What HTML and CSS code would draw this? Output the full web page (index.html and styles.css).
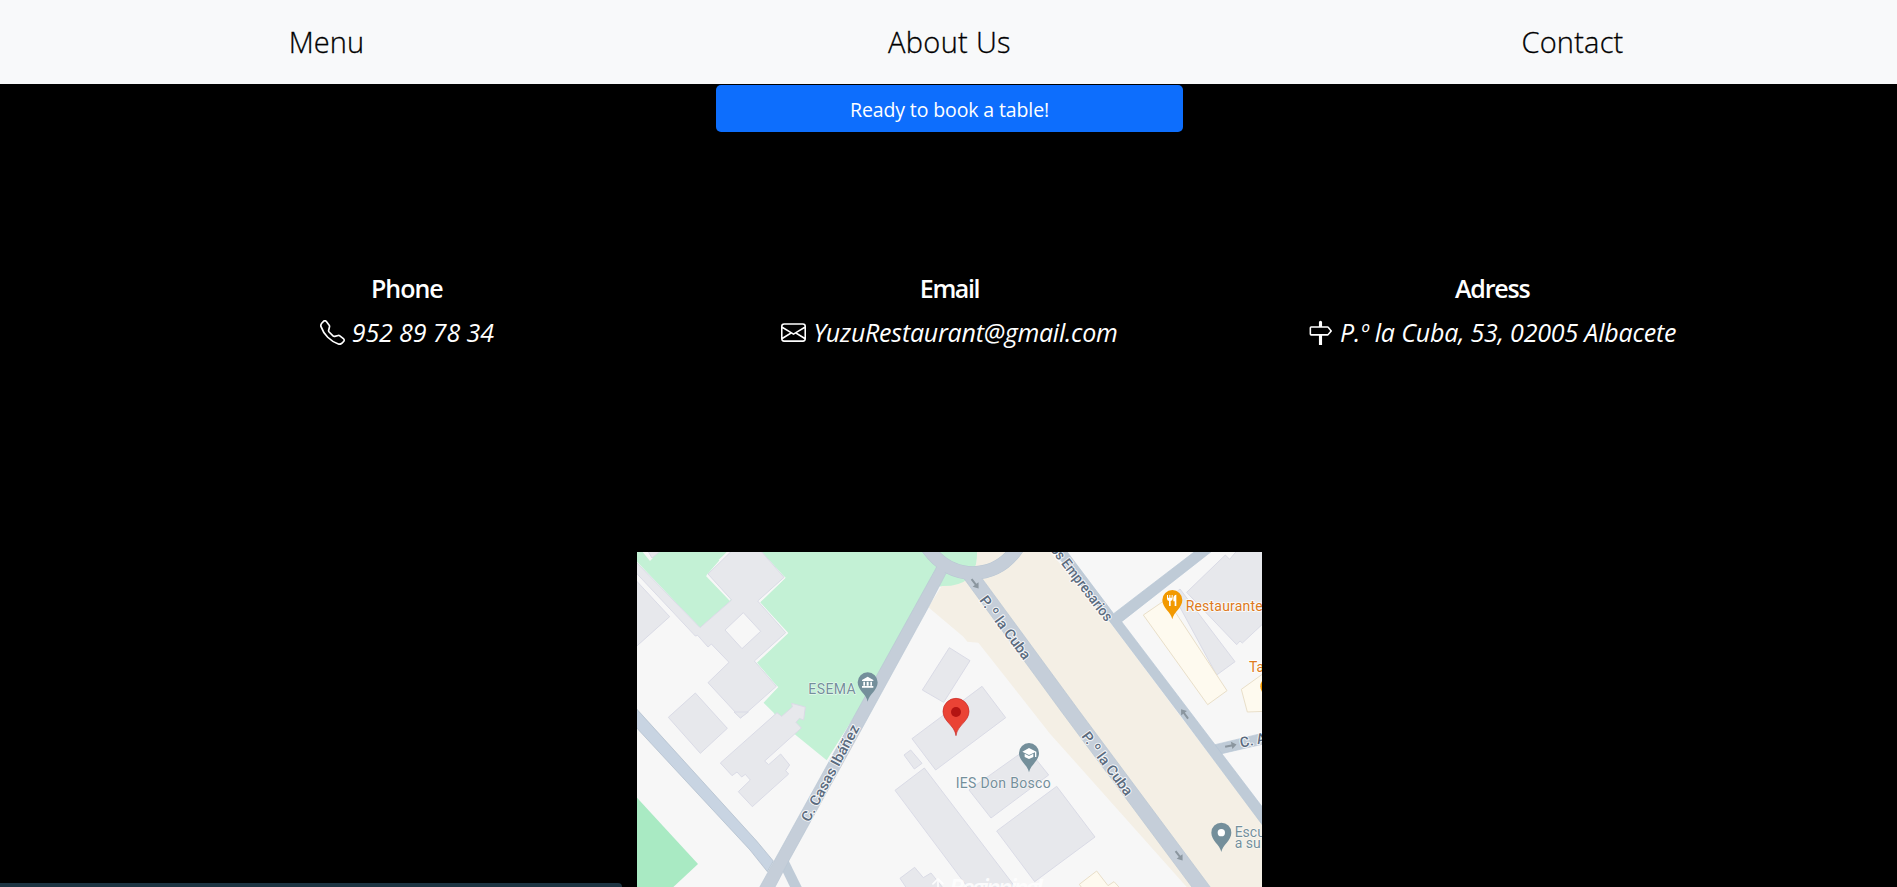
FILE: index.html
```html
<!DOCTYPE html>
<html lang="en">
<head>
<meta charset="utf-8">
<title>Yuzu Restaurant - Contact</title>
<link rel="stylesheet" href="styles.css">
</head>
<body>
<nav class="navbar">
  <a class="nav-menu">Menu</a>
  <a class="nav-about">About Us</a>
  <a class="nav-contact">Contact</a>
</nav>
<main>
  <button class="book">Ready to book a table!</button>
  <section class="contacts">
    <div class="card">
      <h2 class="h-phone">Phone</h2>
      <p><svg class="icon" viewBox="0 0 16 16"><path d="M3.654 1.328a.678.678 0 0 0-1.015-.063L1.605 2.3c-.483.484-.661 1.169-.45 1.77a17.568 17.568 0 0 0 4.168 6.608 17.569 17.569 0 0 0 6.608 4.168c.601.211 1.286.033 1.77-.45l1.034-1.034a.678.678 0 0 0-.063-1.015l-2.307-1.794a.678.678 0 0 0-.58-.122l-2.19.547a1.745 1.745 0 0 1-1.657-.459L5.482 8.062a1.745 1.745 0 0 1-.46-1.657l.548-2.19a.678.678 0 0 0-.122-.58L3.654 1.328zM1.884.511a1.745 1.745 0 0 1 2.612.163L6.29 2.98c.329.423.445.974.315 1.494l-.547 2.19a.678.678 0 0 0 .178.643l2.457 2.457a.678.678 0 0 0 .644.178l2.189-.547a1.745 1.745 0 0 1 1.494.315l2.306 1.794c.829.645.905 1.87.163 2.611l-1.034 1.034c-.74.74-1.846 1.065-2.877.702a18.634 18.634 0 0 1-7.01-4.42 18.634 18.634 0 0 1-4.42-7.009c-.362-1.03-.037-2.137.703-2.877L1.885.511z"/></svg><em class="t-phone">952 89 78 34</em></p>
    </div>
    <div class="card">
      <h2 class="h-email">Email</h2>
      <p><svg class="icon" viewBox="0 0 16 16"><path d="M0 4a2 2 0 0 1 2-2h12a2 2 0 0 1 2 2v8a2 2 0 0 1-2 2H2a2 2 0 0 1-2-2V4Zm2-1a1 1 0 0 0-1 1v.217l7 4.2 7-4.2V4a1 1 0 0 0-1-1H2Zm13 2.383-4.708 2.825L15 11.105V5.383Zm-.034 6.876-5.64-3.471L8 9.583l-1.326-.795-5.64 3.47A1 1 0 0 0 2 13h12a1 1 0 0 0 .966-.741ZM1 11.105l4.708-2.897L1 5.383v5.722Z"/></svg><em class="t-email">YuzuRestaurant@gmail.com</em></p>
    </div>
    <div class="card">
      <h2 class="h-adress">Adress</h2>
      <p><svg class="icon" viewBox="0 0 16 16"><path d="M7 1.414V4H2a1 1 0 0 0-1 1v4a1 1 0 0 0 1 1h5v6h2v-6h3.532a1 1 0 0 0 .768-.36l1.933-2.32a.5.5 0 0 0 0-.64L13.3 4.36a1 1 0 0 0-.768-.36H9V1.414a1 1 0 0 0-2 0zM12.532 5l1.666 2-1.666 2H2V5h10.532z"/></svg><em class="t-adress">P.º la Cuba, 53, 02005 Albacete</em></p>
    </div>
  </section>
  <svg class="map" viewBox="21 21 1875 1005">
    <defs>
      <path id="pin" d="M0 58C-4 36-30 24-30 0A30 30 0 1 1 30 0C30 24 4 36 0 58Z"/>
      <path id="arrow" d="M-17-3H3V-11L18 0L3 11V3H-17Z"/>
    </defs>
    <rect x="21" y="21" width="1875" height="1005" fill="#f7f7f7"/>
    <!-- parks -->
    <path fill="#c3f1d5" d="M21 21H1041Q1046 75 1010 108Q970 134 920 122L590 646L497 570L400 473L443 426L380 352L473 265L390 172L466 98L395 21H290L230 90L305 165L210 248L21 50Z"/>
    <path fill="#a9eac3" d="M21 758L204 957L130 1026H21Z"/>
    <!-- avenue -->
    <path fill="#f4efe5" d="M1041 21H1260L1440 230L1660 525L1896 835V1026H1670L1260 566L1045 293L1012 290L1000 275L895 187L935 123Q1045 125 1041 21Z"/>
    <path fill="#f7f7f7" d="M21 85L190 270L234 306L297 352L234 413L332 519L432 505L400 473L340 550L200 560L21 490ZM266 44L292 21H310L270 49ZM228 93L236 86L305 160L299 167ZM38 21H60L68 40L60 48ZM455 90L467 98L390 172L382 168ZM382 168L390 172L475 264L465 268ZM465 260L475 264L380 354L373 347ZM434 418L445 426L400 473L385 465Z"/>
    <!-- buildings -->
    <g fill="#e7e8ec" stroke="#dadbe6" stroke-width="3">
      <path d="M15 48L210 248L305 165L234 87L308 15H390L462 97L383 168L467 263L373 348L439 424L332 519L234 413L297 352L244 297L234 306L203 271L196 273L15 80Z"/>
      <path fill="#f7f7f7" d="M340 203L285 255L336 311L392 259Z"/>
      <path d="M15 103L119 215L15 308ZM52 15L66 39L95 15Z"/>
      <path d="M196 444L115 517L211 625L292 550ZM312 501L331 519L355 501Z"/>
      <path d="M271 654L441 503L455 514L487 486L485 475L526 486L521 525L508 520L498 532L514 549L404 648L416 659L452 627L479 660L467 677L476 687L367 785L325 740L361 705L346 688L335 696L321 681L306 692Z"/>
      <path d="M958 308L1020 347L941 472L877 435Z"/>
      <path d="M1056 424L1127 518L917 675L846 581Z"/>
      <path d="M822 630L842 615L876 655L853 672Z"/>
      <path d="M883 669L1170 1045H1027L795 736Z"/>
      <path d="M1183 617L1216 640L1256 690L1083 819L1017 735Z"/>
      <path d="M1280 724L1395 876L1214 1010L1100 858Z"/>
      <path d="M810 1000L854 967L880 998L903 984L940 1030H830Z"/>
      <path d="M1910 0L1835 0L1799 43L1786 30L1670 142L1820 299L1830 288L1837 294L1910 226Z"/>
      <path d="M1630 150L1650 132L1815 350L1760 390Z"/>
    </g>
    <path fill="#fefaef" stroke="#e9dfc9" stroke-width="3" d="M1540 210L1610 162L1791 437L1733 479ZM1834 433L1905 382V499L1852 501ZM1348 1018L1400 978L1434 1022L1452 1010L1475 1035H1360Z"/>
    <!-- streets -->
    <path fill="#bfcbd7" stroke="#b6c5d4" stroke-width="2" d="M1443 212L1700 15H1750L1475 230L1910 803V857L1657 518L1440 230L1262 8L1302 8L1450 205ZM1755 599L1905 563V596L1775 626Z"/>
    <path fill="#c8d4e2" stroke="#acbac9" stroke-width="2" d="M10 481L380 888L430 948L412 980L360 915L10 538Z"/>
    <path fill="#bfcbd7" d="M458 980L475 945L517 1030H482Z"/>
    <path fill="none" stroke="#b8c6d3" stroke-width="41" d="M890 5Q945 84 1030 84Q1115 82 1165 5"/>
    <path fill="#c5ced9" stroke="#b8c6d3" stroke-width="2" d="M915 75L386 1032H432L475 950L700 543L895 187L948 85L925 55ZM1000 98L1295 501L1690 1032H1745L1350 501L1050 92Z"/>
    <path fill="none" stroke="#c5ced9" stroke-width="38" d="M890 5Q945 84 1030 84Q1115 82 1165 5"/>
    <g fill="#8b969f">
      <use href="#arrow" transform="translate(1035 116) rotate(53)"/>
      <use href="#arrow" transform="translate(1664 507) rotate(-127)"/>
      <use href="#arrow" transform="translate(1802 602) rotate(-12)"/>
      <use href="#arrow" transform="translate(1647 932) rotate(53)"/>
    </g>
    <!-- labels -->
    <g class="street">
      <text transform="translate(1047 166) rotate(53.4)" textLength="226" lengthAdjust="spacingAndGlyphs">P. º la Cuba</text>
      <text transform="translate(1353 574) rotate(53.4)" textLength="226" lengthAdjust="spacingAndGlyphs">P. º la Cuba</text>
      <text transform="translate(538 833) rotate(-62)" textLength="322" lengthAdjust="spacingAndGlyphs">C. Casas Ibáñez</text>
      <text transform="translate(1260 14) rotate(52.5)" textLength="275" lengthAdjust="spacingAndGlyphs">os Empresarios</text>
      <text transform="translate(1833 608) rotate(-12)">C. A</text>
    </g>
    <g class="place">
      <text x="535" y="447" textLength="142">ESEMA</text>
      <text x="977" y="729" textLength="285">IES Don Bosco</text>
      <text x="1814" y="875">Escu</text>
      <text x="1814" y="909">a su</text>
    </g>
    <g class="food">
      <text x="1667" y="199" textLength="231">Restaurante</text>
      <text x="1857" y="382">Ta</text>
    </g>
    <circle cx="1920" cy="424" r="29" fill="#f29900"/>
    <!-- markers -->
    <g transform="translate(713 412)"><use href="#pin" fill="#748f9b"/><path fill="#fff" d="M-17-7L0-17L17-7V-4H-17ZM-13-2H-8V10H-13ZM-3-2H3V10H-3ZM8-2H13V10H8ZM-17 11H17V16H-17Z"/></g>
    <g transform="translate(1197 624)"><use href="#pin" fill="#748f9b"/><path fill="#fff" d="M0-15L22-4V12H18V-2L0 6L-20-4ZM-13 2L0 9L13 2V12L0 18L-13 12Z"/></g>
    <g transform="translate(1774 863)"><use href="#pin" fill="#748f9b"/><circle r="11" fill="#fff"/></g>
    <g transform="translate(1627 165)"><use href="#pin" fill="#f29900"/><path fill="#fff" d="M-16-15H-13V-7H-9V-15H-6V-7H-2V-15H1V-4Q1 2-5 3V18H-10V3Q-16 2-16-4ZM12-16V18H7V4H3V-6Q4-15 12-16Z"/></g>
    <path fill="#ea4335" stroke="#c5221f" stroke-width="2" d="M978 572C974 540 939 530 939 499A39 39 0 1 1 1017 499C1017 530 982 540 978 572Z"/>
    <circle cx="978" cy="501" r="15" fill="#b31412"/>
  </svg>
</main>
<a class="to-top"><svg class="up" viewBox="0 0 16 16"><path d="M8 15a.5.5 0 0 0 .5-.5V2.707l3.146 3.147a.5.5 0 0 0 .708-.708l-4-4a.5.5 0 0 0-.708 0l-4 4a.5.5 0 1 0 .708.708L7.5 2.707V14.5a.5.5 0 0 0 .5.5z"/></svg>Beginning!</a>
<div class="status"></div>
</body>
</html>
```
FILE: styles.css
```css
* { box-sizing: border-box; }
body {
  margin: 0;
  height: 887px;
  overflow: hidden;
  position: relative;
  background: #000;
  color: #fff;
  font-family: "Open Sans", "Noto Sans", sans-serif;
}
.navbar {
  height: 84px;
  padding: 0 13px 0 15px;
  display: grid;
  grid-template-columns: repeat(3, 1fr);
  align-items: center;
  justify-items: center;
  background: #f8f9fa;
  color: #000;
  font-size: 29px;
  font-weight: 300;
  line-height: 40px;
  -webkit-text-stroke: .3px #000;
}
.nav-menu { letter-spacing: .1px; }
.nav-about { letter-spacing: .3px; }
.nav-contact { letter-spacing: .2px; }
main {
  display: flex;
  flex-direction: column;
  align-items: center;
  padding: 1px 0 0 2px;
}
.book {
  width: 467px;
  height: 47px;
  border: 0;
  border-radius: 5px;
  background: #0d6efd;
  color: #fff;
  font: 400 19.5px "Open Sans", sans-serif;
  letter-spacing: -.12px;
  padding: 1px 0 0;
}
.contacts {
  width: 1628px;
  height: 420px;
  padding-top: 136px;
  display: grid;
  grid-template-columns: repeat(3, 1fr);
  text-align: center;
}
.card h2 {
  margin: 0 0 4px;
  font-size: 25px;
  font-weight: 600;
  line-height: 40px;
}
.card .h-phone { letter-spacing: -1px; }
.card .h-email { letter-spacing: -1.4px; }
.card .h-adress { letter-spacing: -1.2px; }
.card p {
  margin: 0;
  display: flex;
  justify-content: center;
  align-items: center;
  gap: 7px;
  font-size: 25px;
  line-height: 40px;
  white-space: nowrap;
}
.t-phone { letter-spacing: -.1px; }
.t-email { letter-spacing: -.23px; }
.t-adress { letter-spacing: -.17px; }
.icon {
  width: 25px;
  height: 25px;
  fill: currentColor;
}
.map {
  display: block;
  width: 625px;
  height: 335px;
  font-family: Roboto, sans-serif;
}
.map text {
  paint-order: stroke;
  stroke: #fff;
  stroke-width: 6px;
  stroke-opacity: .8;
  stroke-linejoin: round;
}
.street { font-size: 43px; font-weight: 500; fill: #5b6b7e; }
.place { font-size: 42px; fill: #748f9b; }
.food { font-size: 42px; fill: #de7a20; }
.place text { stroke-width: 3px; }
.to-top {
  position: absolute;
  left: 928px;
  top: 867px;
  display: flex;
  align-items: center;
  gap: 1px;
  color: rgba(255, 255, 255, .85);
  font-size: 25px;
  font-style: italic;
  font-weight: 600;
  line-height: 40px;
  letter-spacing: -2.9px;
}
.up { width: 20px; height: 24px; fill: currentColor; stroke: currentColor; stroke-width: .5px; }
.status {
  position: absolute;
  left: 0;
  bottom: 0;
  width: 622px;
  height: 4px;
  border-radius: 0 4px 0 0;
  background: #1d3442;
}
```
